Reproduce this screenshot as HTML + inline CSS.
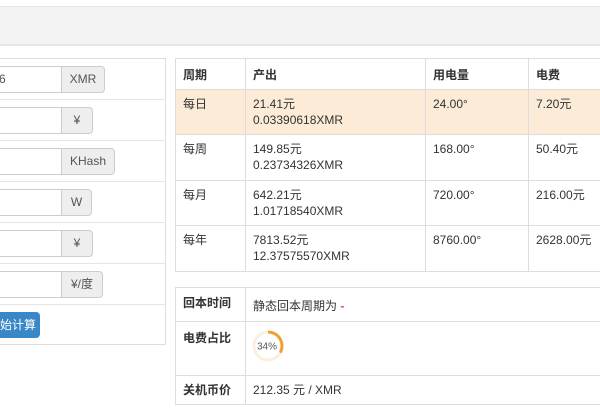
<!DOCTYPE html>
<html><head><meta charset="utf-8"><style>
*{margin:0;padding:0;box-sizing:border-box}
body{width:600px;height:420px;overflow:hidden;background:#fff;font-family:"Liberation Sans","Noto Sans CJK SC",sans-serif;font-size:12px;color:#333;position:relative}
.a{position:absolute}
.band{left:0;top:6px;width:600px;height:40px;background:#f3f3f3;border-top:1px solid #e6e6e6;border-bottom:2px solid #e8e8e8}
.panel{left:-2px;top:58px;width:168px;height:287px;border:1px solid #ddd}
.hl{height:1px;background:#e5e5e5}
.inp{left:-4px;width:66px;height:27px;border:1px solid #ccc;border-right:none;background:#fff;color:#555;font-size:12px;line-height:25px;padding-left:2px}
.ad{left:61px;height:27px;border:1px solid #ccc;background:#eee;border-radius:0 4px 4px 0;color:#555;text-align:center;line-height:25px;font-size:12px}
.btn{left:-4px;top:312px;width:44px;height:26px;background:#3a87c8;border-radius:4px;color:#fff;line-height:26px;text-align:right;padding-right:4px;font-size:12px}
.t{border-collapse:collapse;position:absolute;left:175px;table-layout:fixed}
.t td{border:1px solid #ddd;vertical-align:top;padding:6px 7px 0;line-height:16px;overflow:hidden}
b{font-weight:bold;color:#333}
.hi td{background:#fcebd7}
</style></head><body>
<div class="a band"></div>
<div class="a panel"></div>
<div class="a hl" style="left:0;top:99px;width:166px"></div>
<div class="a hl" style="left:0;top:140px;width:166px"></div>
<div class="a hl" style="left:0;top:181px;width:166px"></div>
<div class="a hl" style="left:0;top:222px;width:166px"></div>
<div class="a hl" style="left:0;top:263px;width:166px"></div>
<div class="a hl" style="left:0;top:304px;width:166px"></div>

<div class="a inp" style="top:66px">6</div><div class="a ad" style="top:66px;width:44px">XMR</div>
<div class="a inp" style="top:107px"></div><div class="a ad" style="top:107px;width:32px">¥</div>
<div class="a inp" style="top:148px"></div><div class="a ad" style="top:148px;width:54px">KHash</div>
<div class="a inp" style="top:189px"></div><div class="a ad" style="top:189px;width:31px">W</div>
<div class="a inp" style="top:230px"></div><div class="a ad" style="top:230px;width:32px">¥</div>
<div class="a inp" style="top:271px"></div><div class="a ad" style="top:271px;width:42px">¥/度</div>
<div class="a btn">始计算</div>

<table class="t" style="top:58px;width:440px">
<colgroup><col style="width:70px"><col style="width:180px"><col style="width:103px"><col></colgroup>
<tr><td style="height:31px;padding-top:8px"><b>周期</b></td><td style="padding-top:8px"><b>产出</b></td><td style="padding-top:8px"><b>用电量</b></td><td style="padding-top:8px"><b>电费</b></td></tr>
<tr class="hi"><td style="height:45px">每日</td><td>21.41元<br>0.03390618XMR</td><td>24.00°</td><td>7.20元</td></tr>
<tr><td style="height:46px">每周</td><td>149.85元<br>0.23734326XMR</td><td>168.00°</td><td>50.40元</td></tr>
<tr><td style="height:45px">每月</td><td>642.21元<br>1.01718540XMR</td><td>720.00°</td><td>216.00元</td></tr>
<tr><td style="height:46px">每年</td><td>7813.52元<br>12.37575570XMR</td><td>8760.00°</td><td>2628.00元</td></tr>
</table>

<table class="t" style="top:287px;width:440px">
<colgroup><col style="width:70px"><col></colgroup>
<tr><td style="height:34px;padding-top:7px"><b>回本时间</b></td><td style="padding-top:10px">静态回本周期为 <span style="color:#d9534f;font-weight:bold">-</span></td></tr>
<tr><td style="height:54px;padding-top:8px"><b>电费占比</b></td><td></td></tr>
<tr><td style="height:29px"><b>关机币价</b></td><td>212.35 元 / XMR</td></tr>
</table>
<svg class="a" style="left:251px;top:329px" width="34" height="34" viewBox="0 0 34 34">
<circle cx="17" cy="17" r="14" fill="none" stroke="#fbf0e0" stroke-width="3"/>
<path d="M17 3 A14 14 0 0 1 29.3 23.7" fill="none" stroke="#f0a030" stroke-width="3"/>
<text x="16" y="20.5" font-size="10" text-anchor="middle" fill="#555" font-family="Liberation Sans">34%</text>
</svg>
</body></html>
